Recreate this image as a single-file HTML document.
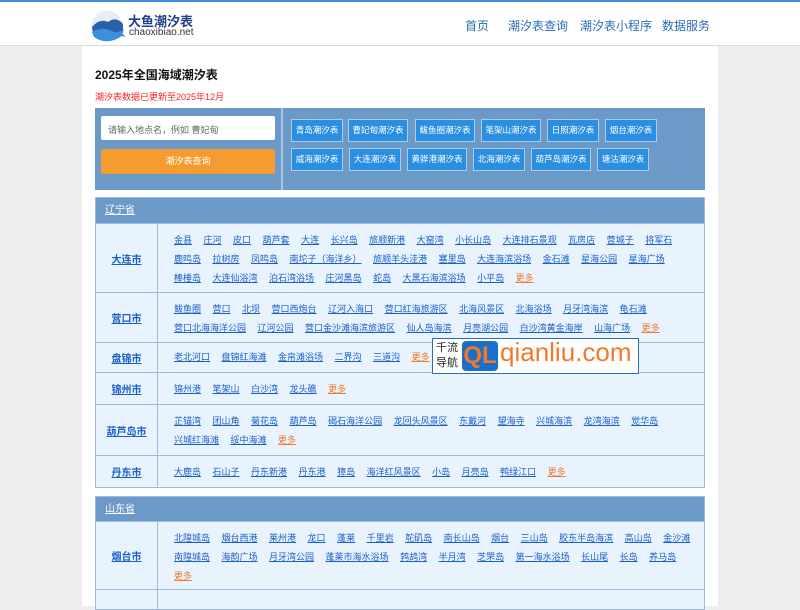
<!DOCTYPE html>
<html><head><meta charset="utf-8"><style>
*{margin:0;padding:0;box-sizing:border-box}
body{width:800px;height:599px;overflow:hidden;background:#eeeeee;font-family:"Liberation Sans","Noto Sans CJK SC",sans-serif;position:relative}
.top{position:absolute;left:0;top:0;width:800px;height:46px;background:#fff;border-top:2px solid #3d8fdc;border-bottom:1px solid #ddd}
.nav a{position:absolute;top:15px;font-size:12px;color:#2a6db5;text-decoration:none}
.main{position:absolute;left:82px;top:46px;width:636px;height:560px;background:#fff}
a{color:#1a5fc9;text-decoration:underline}
.search{position:absolute;left:95px;top:108px;width:610px;height:82px;background:#6b99c8}
.inp{position:absolute;left:6px;top:8px;width:174px;height:24px;background:#fff;border-radius:2px;font-size:9px;color:#666;padding:7px 7px}
.btn{position:absolute;left:6px;top:41px;width:174px;height:25px;background:#f59c31;border-radius:2px;font-size:9px;color:#fff;text-align:center;line-height:25px}
.div{position:absolute;left:186px;top:0;width:2px;height:82px;background:#a9c4e0}
.tag{position:absolute;height:23px;background:#2b8fe1;border:1px solid #a9cdee;color:#fff;font-size:8.5px;text-align:center;line-height:21px}
.prov{position:absolute;left:95px;width:610px;background:#6b99c8;color:#fff;font-size:10px;padding-left:9px;text-decoration:underline;border:1px solid #9bbbe0}
.row{position:absolute;left:95px;width:610px;background:#e9f3fe;border:1px solid #9bbbe0;border-top:none}
.city{position:absolute;left:0;top:0;bottom:0;width:62px;border-right:1px solid #9bbbe0;display:flex;align-items:center;justify-content:center;font-size:10px;font-weight:bold}
.city a{color:#1a5fc9}
.links{position:absolute;left:78px;top:7px;width:530px;font-size:9px;line-height:19px;display:flex;flex-wrap:wrap}
.links a{margin-right:11.5px;white-space:nowrap;color:#1a5fc9}
.links a.m{color:#f07a2a}
</style></head><body>
<div class="top">
<svg style="position:absolute;left:90px;top:8px" width="36" height="33" viewBox="0 0 36 33"><circle cx="17" cy="16" r="15.5" fill="#e8eef6"/><path d="M2 17 Q10 8 18 12 Q26 6 33 14 L33 22 Q17 34 3 24Z" fill="#2b5fa8"/><path d="M2 22 Q12 16 22 21 Q28 24 34 19 L32 26 Q17 36 4 27Z" fill="#3d8fdc"/><path d="M28 24 Q33 22 35 27 Q31 26 28 24Z" fill="#3d8fdc"/></svg>
<div style="position:absolute;left:128px;top:9px;font-size:13px;font-weight:bold;color:#23408a">大鱼潮汐表</div>
<div style="position:absolute;left:129px;top:25px;font-size:10px;color:#333">chaoxibiao.net</div>
<div class="nav"><a style="left:465px">首页</a><a style="left:508px">潮汐表查询</a><a style="left:580px">潮汐表小程序</a><a style="left:662px">数据服务</a></div>
</div>
<div class="main"></div>
<div style="position:absolute;left:95px;top:66px;font-size:12px;font-weight:bold;color:#111">2025年全国海域潮汐表</div>
<div style="position:absolute;left:95px;top:90px;font-size:9px;color:#f22">潮汐表数据已更新至2025年12月</div>
<div class="search"><div class="inp">请输入地点名，例如 曹妃甸</div><div class="btn">潮汐表查询</div><div class="div"></div>
<div class="tag" style="left:196px;top:11px;width:52px">青岛潮汐表</div>
<div class="tag" style="left:253px;top:11px;width:60px">曹妃甸潮汐表</div>
<div class="tag" style="left:320px;top:11px;width:60px">鲅鱼圈潮汐表</div>
<div class="tag" style="left:386px;top:11px;width:60px">笔架山潮汐表</div>
<div class="tag" style="left:452px;top:11px;width:52px">日照潮汐表</div>
<div class="tag" style="left:510px;top:11px;width:52px">烟台潮汐表</div>
<div class="tag" style="left:196px;top:40px;width:52px">威海潮汐表</div>
<div class="tag" style="left:254px;top:40px;width:52px">大连潮汐表</div>
<div class="tag" style="left:312px;top:40px;width:60px">黄骅港潮汐表</div>
<div class="tag" style="left:378px;top:40px;width:52px">北海潮汐表</div>
<div class="tag" style="left:436px;top:40px;width:60px">葫芦岛潮汐表</div>
<div class="tag" style="left:502px;top:40px;width:52px">塘沽潮汐表</div>
</div>
<div class="prov" style="top:197px;height:27px;line-height:26px">辽宁省</div>
<div class="row" style="top:224px;height:69px"><div class="city"><a>大连市</a></div><div class="links"><a>金县</a><a>庄河</a><a>皮口</a><a>葫芦套</a><a>大连</a><a>长兴岛</a><a>旅顺新港</a><a>大窑湾</a><a>小长山岛</a><a>大连排石景观</a><a>瓦房店</a><a>营城子</a><a>将军石</a><a>鹿鸣岛</a><a>拉树房</a><a>凤鸣岛</a><a>南坨子（海洋乡）</a><a>旅顺羊头洼港</a><a>塞里岛</a><a>大连海滨浴场</a><a>金石滩</a><a>星海公园</a><a>星海广场</a><a>棒棰岛</a><a>大连仙浴湾</a><a>泊石湾浴场</a><a>庄河黑岛</a><a>蛇岛</a><a>大黑石海滨浴场</a><a>小平岛</a><a class="m">更多</a></div></div>
<div class="row" style="top:293px;height:50px"><div class="city"><a>营口市</a></div><div class="links"><a>鲅鱼圈</a><a>营口</a><a>北坝</a><a>营口西炮台</a><a>辽河入海口</a><a>营口红海旅游区</a><a>北海风景区</a><a>北海浴场</a><a>月牙湾海滨</a><a>龟石滩</a><a>营口北海海洋公园</a><a>辽河公园</a><a>营口金沙滩海滨旅游区</a><a>仙人岛海滨</a><a>月亮湖公园</a><a>白沙湾黄金海岸</a><a>山海广场</a><a class="m">更多</a></div></div>
<div class="row" style="top:343px;height:30px"><div class="city"><a>盘锦市</a></div><div class="links" style="top:5px"><a>老北河口</a><a>盘锦红海滩</a><a>金帛滩浴场</a><a>二界沟</a><a>三道沟</a><a class="m">更多</a></div></div>
<div class="row" style="top:373px;height:32px"><div class="city"><a>锦州市</a></div><div class="links" style="top:7px"><a>锦州港</a><a>笔架山</a><a>白沙湾</a><a>龙头礁</a><a class="m">更多</a></div></div>
<div class="row" style="top:405px;height:51px"><div class="city"><a>葫芦岛市</a></div><div class="links"><a>芷锚湾</a><a>团山角</a><a>菊花岛</a><a>葫芦岛</a><a>碣石海洋公园</a><a>龙回头风景区</a><a>东戴河</a><a>望海寺</a><a>兴城海滨</a><a>龙湾海滨</a><a>觉华岛</a><a>兴城红海滩</a><a>绥中海滩</a><a class="m">更多</a></div></div>
<div class="row" style="top:456px;height:32px"><div class="city"><a>丹东市</a></div><div class="links" style="top:7px"><a>大鹿岛</a><a>石山子</a><a>丹东新港</a><a>丹东港</a><a>獐岛</a><a>海洋红风景区</a><a>小岛</a><a>月亮岛</a><a>鸭绿江口</a><a class="m">更多</a></div></div>
<div class="prov" style="top:496px;height:26px;line-height:25px">山东省</div>
<div class="row" style="top:522px;height:68px"><div class="city"><a>烟台市</a></div><div class="links"><a>北隍城岛</a><a>烟台西港</a><a>莱州港</a><a>龙口</a><a>蓬莱</a><a>千里岩</a><a>鸵矶岛</a><a>南长山岛</a><a>烟台</a><a>三山岛</a><a>胶东半岛海滨</a><a>高山岛</a><a>金沙滩</a><a>南隍城岛</a><a>海韵广场</a><a>月牙湾公园</a><a>蓬莱市海水浴场</a><a>鹁鸪湾</a><a>半月湾</a><a>芝罘岛</a><a>第一海水浴场</a><a>长山尾</a><a>长岛</a><a>养马岛</a><a class="m">更多</a></div></div>
<div class="row" style="top:590px;height:20px"><div class="city"></div></div>
<div style="position:absolute;left:432px;top:338px;width:207px;height:36px;background:#fff;border:1px solid #2a6db5">
<div style="position:absolute;left:3px;top:2px;font-size:11px;line-height:15px;color:#222">千流<br>导航</div>
<div style="position:absolute;left:29px;top:2px;width:36px;height:30px;background:#1a6fc9;border-radius:4px;color:#f07a2a;font-size:24px;font-weight:bold;line-height:30px;text-align:center">QL</div>
<div style="position:absolute;left:67px;top:-2px;font-size:26px;color:#f07a2a">qianliu.com</div>
</div>
</body></html>
